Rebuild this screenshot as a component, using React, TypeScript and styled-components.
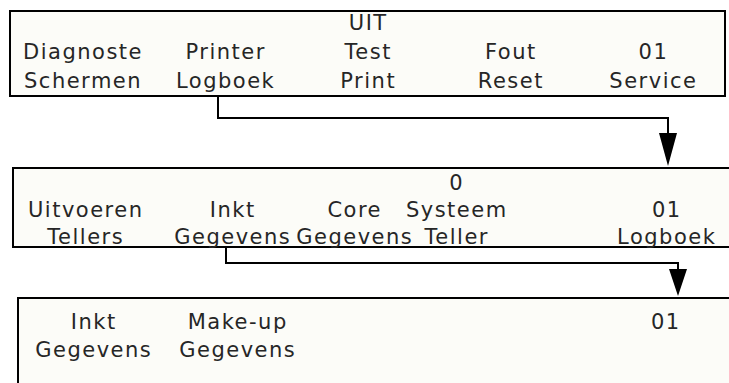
import React, { ReactElement } from 'react';
import styled, { createGlobalStyle } from 'styled-components';

const GlobalStyle = createGlobalStyle`
  html, body {
    margin: 0;
    padding: 0;
    background: #ffffff;
    overflow: hidden;
  }
`;

interface PanelDef {
  left: number;
  height: number;
  padTop: number;
  gap: number;
  open?: 'right' | 'rightBottom';
  columns: { w?: number; lines: string[] }[];
}

const Page = styled.div`
  width: 729px;
  height: 383px;
  padding-top: 10px;
  box-sizing: border-box;
  display: flex;
  flex-direction: column;
  overflow: hidden;
`;

const Panel = styled.div<{ $left: number; $height: number; $padTop: number; $open?: string }>`
  margin-left: ${({ $left }): number => $left}px;
  width: ${({ $open, $left }): string => ($open ? `${729 - $left + 20}px` : '717px')};
  height: ${({ $height }): number => $height}px;
  flex-shrink: 0;
  box-sizing: border-box;
  border: 2px solid #000;
  border-right-width: ${({ $open }): string => ($open ? '0' : '2px')};
  border-bottom-width: ${({ $open }): string => ($open === 'rightBottom' ? '0' : '2px')};
  background: #fcfcf8;
  padding-top: ${({ $padTop }): number => $padTop}px;
  display: flex;
  flex-direction: row;
`;

const Column = styled.div<{ $w?: number; $gap: number }>`
  flex: ${({ $w }): string => ($w ? `0 0 ${$w}px` : '1 1 0')};
  min-width: 0;
  display: flex;
  flex-direction: column;
  align-items: center;
  gap: ${({ $gap }): number => $gap}px;
`;

const Label = styled.div`
  font-family: 'DejaVu Sans', 'Liberation Sans', sans-serif;
  font-size: 21px;
  line-height: 22px;
  height: 22px;
  letter-spacing: 1.5px;
  padding-left: 1.5px;
  color: #262626;
  white-space: nowrap;
`;

const Connector = styled.svg`
  display: block;
  flex-shrink: 0;
`;

const panels: PanelDef[] = [
  {
    left: 9,
    height: 87,
    padTop: 0,
    gap: 7,
    columns: [
      { lines: ['', 'Diagnoste', 'Schermen'] },
      { lines: ['', 'Printer', 'Logboek'] },
      { lines: ['UIT', 'Test', 'Print'] },
      { lines: ['', 'Fout', 'Reset'] },
      { lines: ['', '01', 'Service'] },
    ],
  },
  {
    left: 12,
    height: 81,
    padTop: 3,
    gap: 5,
    open: 'right',
    columns: [
      { w: 142, lines: ['', 'Uitvoeren', 'Tellers'] },
      { w: 152, lines: ['', 'Inkt', 'Gegevens'] },
      { w: 92, lines: ['', 'Core', 'Gegevens'] },
      { w: 112, lines: ['0', 'Systeem', 'Teller'] },
      { w: 308, lines: ['', '01', 'Logboek'] },
    ],
  },
  {
    left: 17,
    height: 100,
    padTop: 12,
    gap: 6,
    open: 'rightBottom',
    columns: [
      { w: 148, lines: ['Inkt', 'Gegevens'] },
      { w: 140, lines: ['Make-up', 'Gegevens'] },
      { w: 144, lines: [''] },
      { w: 144, lines: [''] },
      { w: 140, lines: ['01'] },
    ],
  },
];

function LcdPanel({ def }: { def: PanelDef }): ReactElement {
  return (
    <Panel $left={def.left} $height={def.height} $padTop={def.padTop} $open={def.open}>
      {def.columns.map((col, i) => (
        <Column key={i} $w={col.w} $gap={def.gap}>
          {col.lines.map((line, j) => (
            <Label key={j}>{line || '\u00a0'}</Label>
          ))}
        </Column>
      ))}
    </Panel>
  );
}

// elbow line from one menu item down to the next screen, with a filled arrow head
function Arrow(props: { height: number; fromX: number; bendY: number; toX: number; headY: number }): ReactElement {
  const { height, fromX, bendY, toX, headY } = props;
  return (
    <Connector width={729} height={height} viewBox={`0 0 729 ${height}`}>
      <path
        d={`M${fromX} 0 V${bendY} H${toX} V${headY + 1}`}
        fill="none"
        stroke="#000"
        strokeWidth={2}
      />
      <polygon points={`${toX - 9},${headY} ${toX + 9},${headY} ${toX},${height - 1}`} fill="#000" />
    </Connector>
  );
}

export default function App(): ReactElement {
  return (
    <Page>
      <GlobalStyle />
      <LcdPanel def={panels[0]} />
      <Arrow height={70} fromX={218} bendY={21} toX={668} headY={36} />
      <LcdPanel def={panels[1]} />
      <Arrow height={49} fromX={226} bendY={15} toX={678} headY={21} />
      <LcdPanel def={panels[2]} />
    </Page>
  );
}
